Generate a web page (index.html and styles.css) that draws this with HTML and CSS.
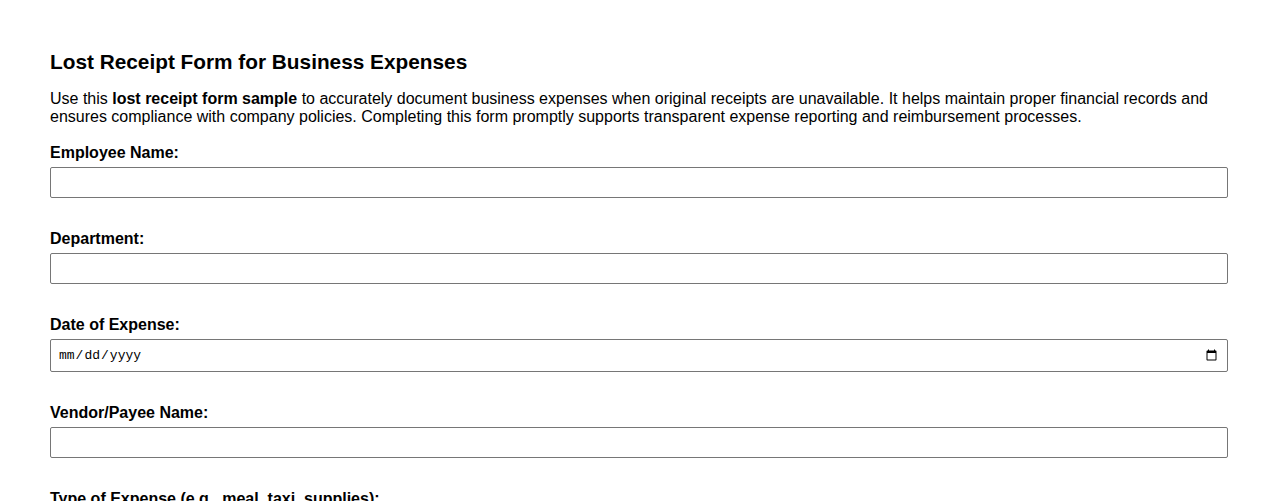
FILE: index.html
```html
<!DOCTYPE html>
<html lang="en">
<head>
<meta charset="utf-8">
<title>Lost Receipt Form for Business Expenses</title>
<link rel="stylesheet" href="styles.css">
</head>
<body>
<main class="page">
  <h2 class="title">Lost Receipt Form for Business Expenses</h2>
  <p class="intro">Use this <strong>lost receipt form sample</strong> to accurately document business expenses when original receipts are unavailable. It helps maintain proper financial records and ensures compliance with company policies. Completing this form promptly supports transparent expense reporting and reimbursement processes.</p>
  <form class="form">
    <div class="field">
      <label class="label" for="emp">Employee Name:</label>
      <input class="input" id="emp" type="text">
    </div>
    <div class="field">
      <label class="label" for="dept">Department:</label>
      <input class="input" id="dept" type="text">
    </div>
    <div class="field">
      <label class="label" for="date">Date of Expense:</label>
      <input class="input input-date" id="date" type="date">
    </div>
    <div class="field">
      <label class="label" for="vendor">Vendor/Payee Name:</label>
      <input class="input" id="vendor" type="text">
    </div>
    <div class="field">
      <label class="label" for="type">Type of Expense (e.g., meal, taxi, supplies):</label>
      <input class="input" id="type" type="text">
    </div>
  </form>
</main>
</body>
</html>
```

FILE: styles.css
```css
html, body {
  margin: 0;
  padding: 0;
  background: #ffffff;
}
body {
  font-family: "Liberation Sans", Arial, sans-serif;
  color: #000;
}
.page {
  padding: 40px 50px;
}
.title {
  font-size: 20.8px;
  font-weight: bold;
  margin: 10px 0 16px;
}
.intro {
  font-size: 16px;
  line-height: 18px;
  margin: 0 0 18px;
}
.form {
  display: flex;
  flex-direction: column;
  gap: 32px;
}
.field {
  display: flex;
  flex-direction: column;
}
.label {
  font-size: 16px;
  font-weight: bold;
  line-height: 18px;
  margin-bottom: 5px;
}
.input {
  box-sizing: border-box;
  width: 100%;
  height: 31px;
  padding: 7px;
  border: 1px solid #767676;
  border-radius: 2px;
  font-family: "Liberation Sans", Arial, sans-serif;
  font-size: 13.33px;
  background: #fff;
}
.input-date {
  height: 33px;
  font-family: "Liberation Mono", "DejaVu Sans Mono", monospace;
  font-size: 13px;
}
```
